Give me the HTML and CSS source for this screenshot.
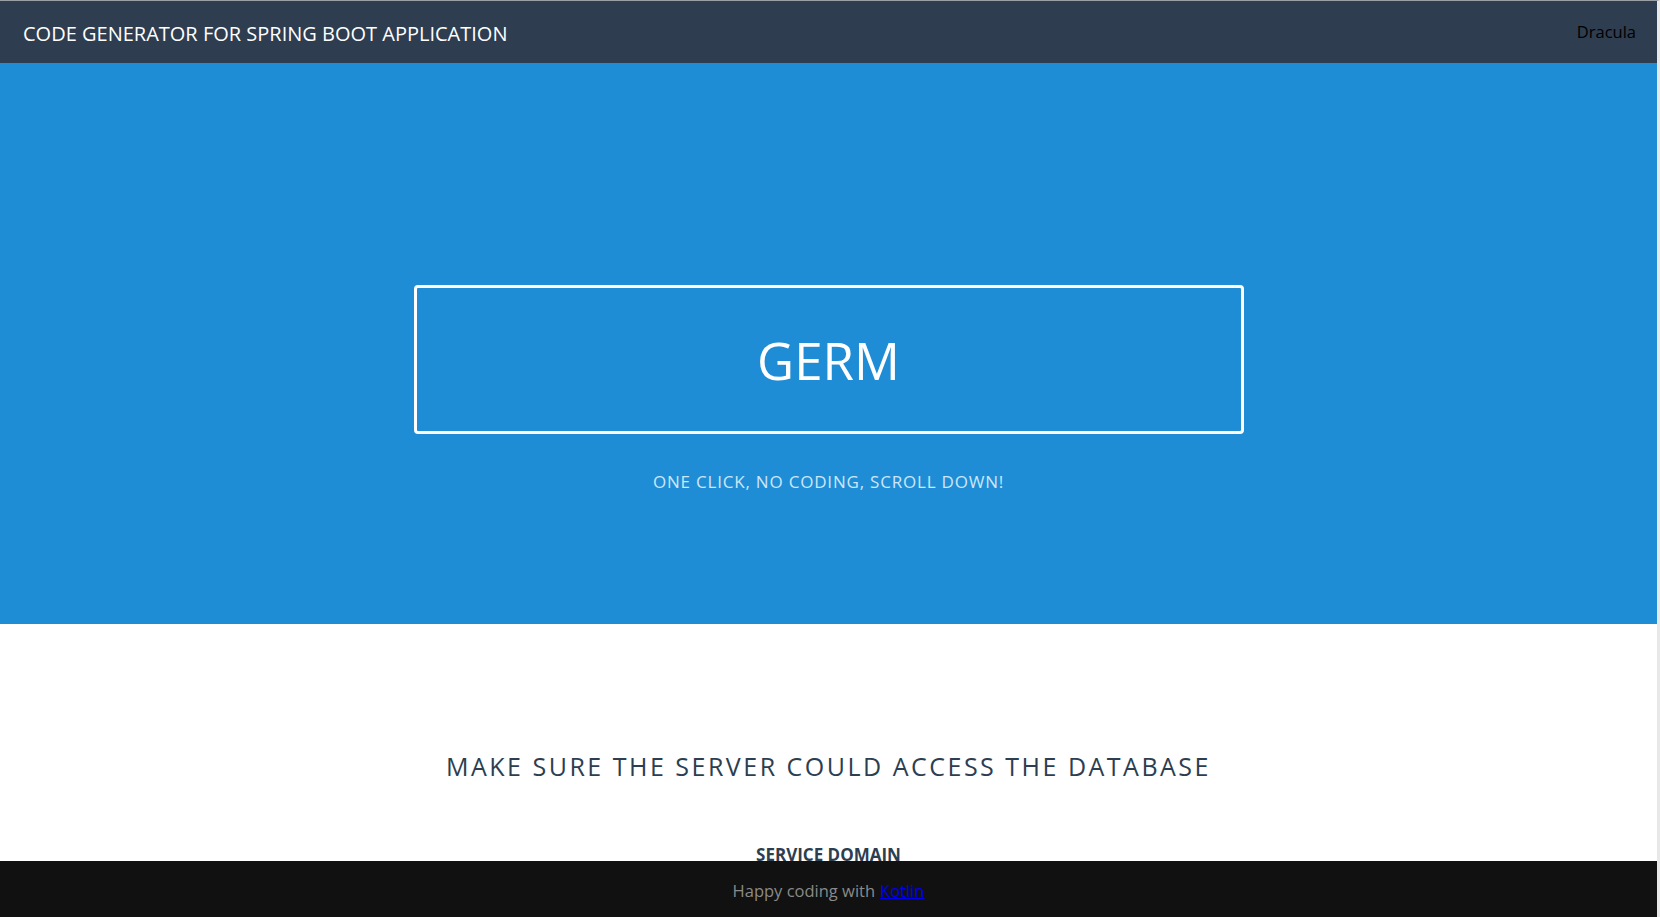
FILE: index.html
```html
<!DOCTYPE html>
<html>
<head>
<meta charset="utf-8">
<title>GERM</title>
<link rel="stylesheet" href="styles.css">
</head>
<body>
<header class="topbar">
  <div class="brand">CODE GENERATOR FOR SPRING BOOT APPLICATION</div>
  <div class="theme">Dracula</div>
</header>
<section class="hero">
  <div class="hero-box"><h1>GERM</h1></div>
  <p class="tagline">ONE CLICK, NO CODING, SCROLL DOWN!</p>
</section>
<section class="config">
  <h2>MAKE SURE THE SERVER COULD ACCESS THE DATABASE</h2>
  <div class="field-label">SERVICE DOMAIN</div>
  <div class="spacer"></div>
</section>
<footer class="footer">Happy coding with <a href="#">Kotlin</a></footer>
</body>
</html>
```
FILE: styles.css
```css
html, body {
  margin: 0;
  padding: 0;
  height: 100%;
  overflow: hidden;
}
body {
  font-family: "Open Sans", "Noto Sans", sans-serif;
  background: #fff;
  border-top: 1px solid #9aa0a6;
  border-right: 3px solid #e8e8e8;
}
.topbar {
  height: 62px;
  background: #2e3d50;
  display: flex;
  align-items: center;
  justify-content: space-between;
  padding: 0 21px 0 23px;
}
.brand {
  color: #fff;
  font-size: 20px;
  padding-top: 2px;
}
.theme {
  color: #000;
  font-size: 16.5px;
  padding-bottom: 2px;
}
.hero {
  background: #1e8dd6;
  height: 561px;
  display: flex;
  flex-direction: column;
  align-items: center;
  padding-top: 222px;
  box-sizing: border-box;
}
.hero-box {
  width: 830px;
  height: 149px;
  box-sizing: border-box;
  border: 3px solid #fff;
  border-radius: 4px;
  display: flex;
  align-items: center;
  justify-content: center;
}
.hero-box h1 {
  margin: 0;
  color: #fff;
  font-weight: 400;
  font-size: 51px;
}
.tagline {
  margin: 36px 0 0;
  color: #cde6f8;
  font-size: 17px;
  letter-spacing: 0.8px;
}
.config {
  display: flex;
  flex-direction: column;
  align-items: center;
  padding-top: 125px;
}
.config h2 {
  margin: 0;
  color: #2c3e50;
  font-weight: 400;
  font-size: 25px;
  letter-spacing: 2.5px;
}
.field-label {
  margin-top: 60px;
  color: #2c3e50;
  font-weight: 700;
  font-size: 17px;
}
.spacer { height: 200px; }
.footer {
  position: fixed;
  left: 0;
  right: 3px;
  bottom: 0;
  height: 56px;
  padding-top: 3px;
  box-sizing: border-box;
  background: #111;
  color: #8a8a8a;
  font-size: 16.5px;
  display: flex;
  align-items: center;
  justify-content: center;
  gap: 5px;
}
.footer a {
  color: #0000ee;
  text-decoration: underline;
}
```
